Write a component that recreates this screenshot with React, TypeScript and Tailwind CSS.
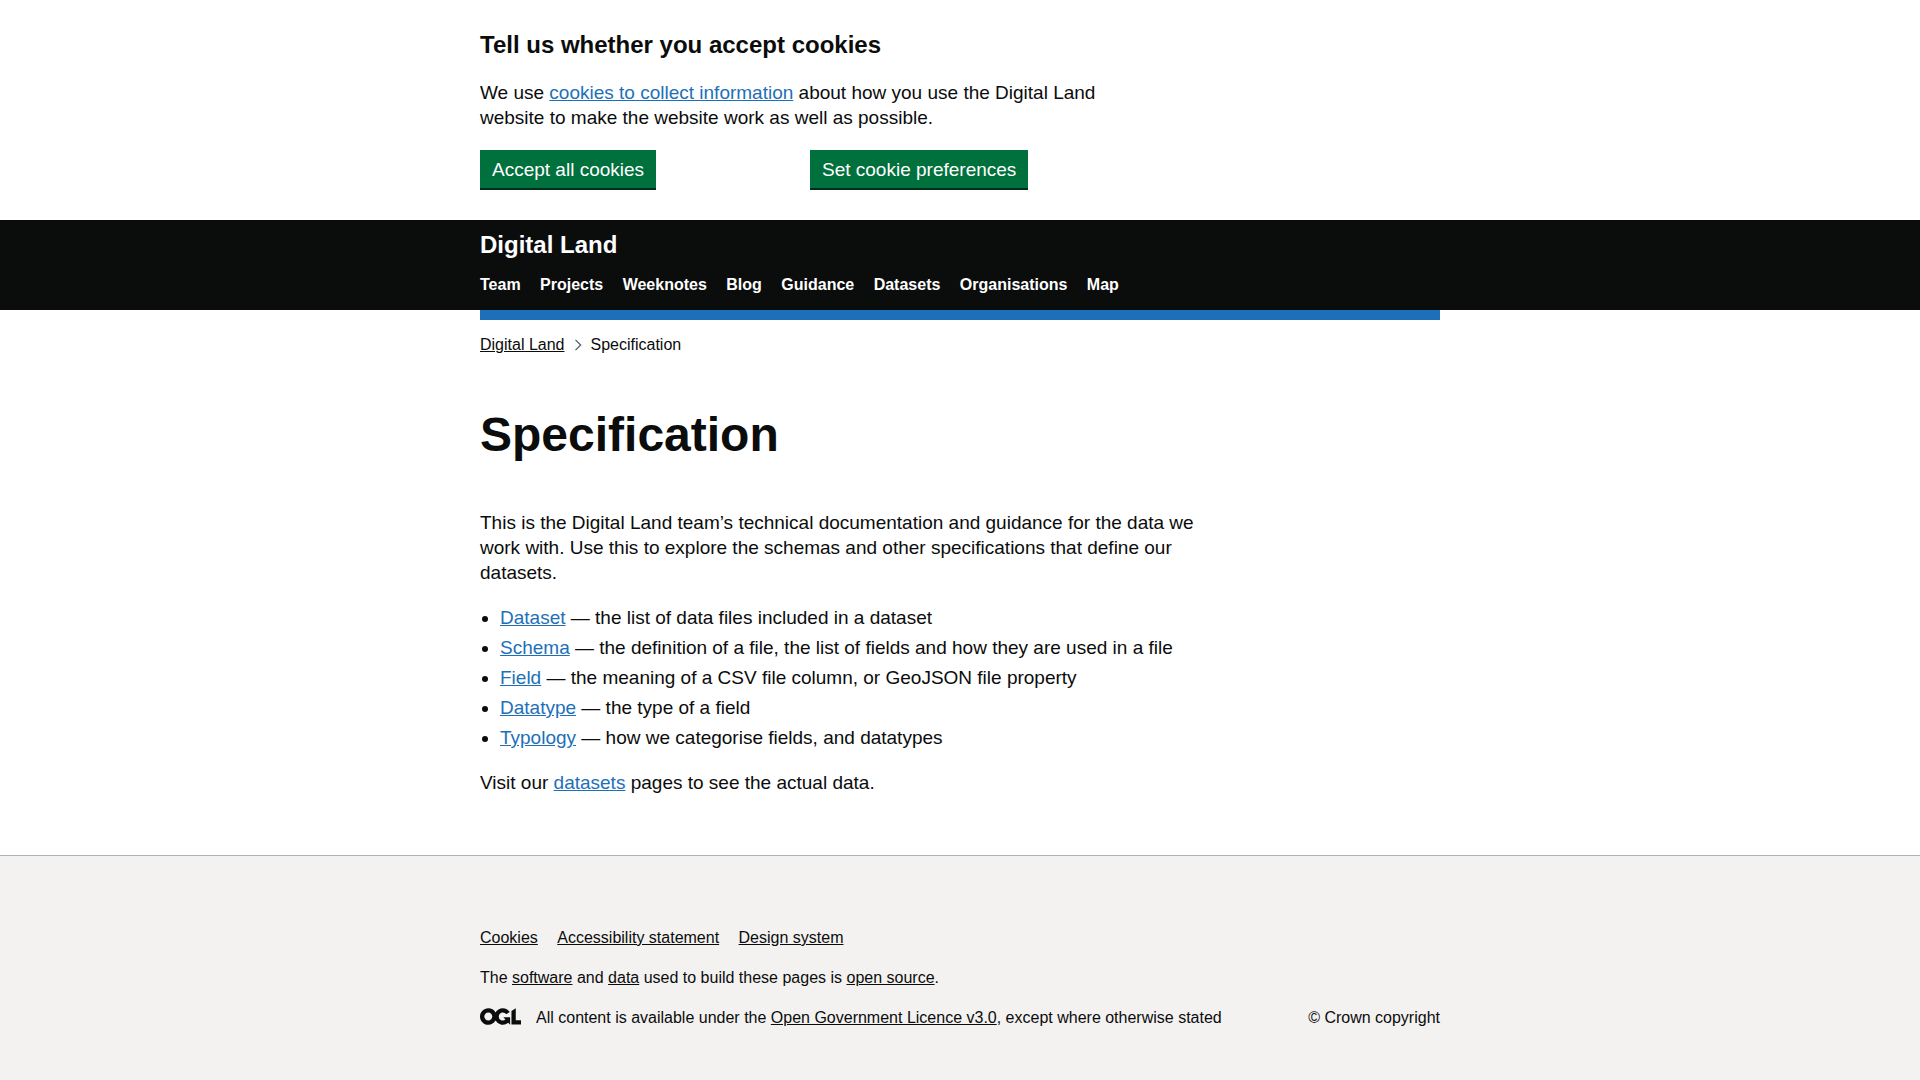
import type { ReactNode } from "react";

const navItems = ["Team", "Projects", "Weeknotes", "Blog", "Guidance", "Datasets", "Organisations", "Map"];

const sections = [
  { name: "Dataset", text: "the list of data files included in a dataset" },
  { name: "Schema", text: "the definition of a file, the list of fields and how they are used in a file" },
  { name: "Field", text: "the meaning of a CSV file column, or GeoJSON file property" },
  { name: "Datatype", text: "the type of a field" },
  { name: "Typology", text: "how we categorise fields, and datatypes" },
];

const footerLinks = ["Cookies", "Accessibility statement", "Design system"];

function Container({ children }: { children: ReactNode }) {
  return <div className="mx-auto w-full max-w-[960px]">{children}</div>;
}

function Link({ children }: { children: ReactNode }) {
  return (
    <a href="#" className="text-[#1d70b8] underline">
      {children}
    </a>
  );
}

function DarkLink({ children }: { children: ReactNode }) {
  return (
    <a href="#" className="underline">
      {children}
    </a>
  );
}

function Button({ children }: { children: ReactNode }) {
  return (
    <button
      type="button"
      className="mb-0.5 h-[38px] bg-[#00703c] px-3 text-[19px] leading-[19px] text-white shadow-[0_2px_0_#002d18]"
    >
      {children}
    </button>
  );
}

function CookieBanner() {
  return (
    <section aria-label="Cookie banner" className="py-[30px]">
      <Container>
        <h2 className="mb-5 text-2xl leading-[30px] font-bold">Tell us whether you accept cookies</h2>
        <p className="mb-5 max-w-[630px]">
          We use <Link>cookies to collect information</Link> about how you use the Digital Land website to make the
          website work as well as possible.
        </p>
        <div className="grid grid-cols-[330px_1fr] justify-items-start">
          <Button>Accept all cookies</Button>
          <Button>Set cookie preferences</Button>
        </div>
      </Container>
    </section>
  );
}

function Header() {
  return (
    <header className="bg-[#0b0c0c] pt-2.5 pb-[15px] text-white">
      <Container>
        <a href="#" className="block text-2xl leading-[30px] font-bold">
          Digital Land
        </a>
        <nav aria-label="Top level navigation" className="mt-[15px]">
          <ul className="text-base leading-5 font-bold">
            {navItems.map((item) => [
              <li key={item} className="mr-[15px] inline">
                <a href="#">{item}</a>
              </li>,
              " ",
            ])}
          </ul>
        </nav>
      </Container>
    </header>
  );
}

function Breadcrumbs() {
  return (
    <nav aria-label="Breadcrumb" className="pt-[15px]">
      <ol className="flex items-center text-base leading-5">
        <li>
          <DarkLink>Digital Land</DarkLink>
        </li>
        <li className="flex items-center" aria-current="page">
          <svg
            width="7"
            height="12"
            viewBox="0 0 7 12"
            className="mr-[9px] ml-[10px]"
            fill="none"
            stroke="#505a5f"
            strokeWidth="1.2"
            aria-hidden="true"
          >
            <path d="M0.5 0.8 L5.7 6 L0.5 11.2" />
          </svg>
          Specification
        </li>
      </ol>
    </nav>
  );
}

function OglLogo() {
  return (
    <svg className="mr-[15px] shrink-0" width="41" height="17" viewBox="0 0 483.2 195.7" fill="currentColor" aria-hidden="true">
      <path d="M421.5 142.8V.1l-50.7 32.3v161.1h112.4v-50.7zm-122.3-9.6A47.12 47.12 0 0 1 221 97.8c0-26 21.1-47.1 47.1-47.1 16.7 0 31.4 8.7 39.7 21.8l42.7-27.2A97.63 97.63 0 0 0 268.1 0c-36.5 0-68.3 20.1-85.1 49.7A98 98 0 0 0 97.8 0C43.9 0 0 43.9 0 97.8s43.9 97.8 97.8 97.8c36.5 0 68.3-20.1 85.1-49.7a97.76 97.76 0 0 0 149.6 25.4l19.4 22.2h3v-87.8h-80l24.3 27.5zM97.8 145c-26 0-47.1-21.1-47.1-47.1s21.1-47.1 47.1-47.1 47.1 21.1 47.1 47.1S123.8 145 97.8 145" />
    </svg>
  );
}

function Footer() {
  return (
    <footer className="grow border-t border-[#b1b4b6] bg-[#f3f2f1] pt-[72px] pb-10 text-base leading-5">
      <Container>
        <ul className="mb-5">
          {footerLinks.map((item) => [
            <li key={item} className="mr-[15px] inline">
              <DarkLink>{item}</DarkLink>
            </li>,
            " ",
          ])}
        </ul>
        <p className="mb-5">
          The <DarkLink>software</DarkLink> and <DarkLink>data</DarkLink> used to build these pages is{" "}
          <DarkLink>open source</DarkLink>.
        </p>
        <div className="flex items-start">
          <OglLogo />
          <p className="grow">
            All content is available under the <DarkLink>Open Government Licence v3.0</DarkLink>, except where otherwise
            stated
          </p>
          <a href="#">© Crown copyright</a>
        </div>
      </Container>
    </footer>
  );
}

export default function App() {
  return (
    <div className="flex min-h-screen flex-col bg-white font-['Liberation_Sans',Arial,sans-serif] text-[19px] leading-[25px] text-[#0b0c0c]">
      <CookieBanner />
      <Header />
      <Container>
        <div className="h-2.5 bg-[#1d70b8]" />
        <Breadcrumbs />
        <main className="pt-[55px] pb-[60px]">
          <h1 className="mb-[50px] text-5xl leading-[50px] font-bold">Specification</h1>
          <div className="max-w-[720px]">
            <p className="mb-5">
              This is the Digital Land team’s technical documentation and guidance for the data we work with. Use this
              to explore the schemas and other specifications that define our datasets.
            </p>
            <ul className="mb-5 list-disc space-y-[5px] pl-5">
              {sections.map((section) => (
                <li key={section.name}>
                  <Link>{section.name}</Link> — {section.text}
                </li>
              ))}
            </ul>
            <p>
              Visit our <Link>datasets</Link> pages to see the actual data.
            </p>
          </div>
        </main>
      </Container>
      <Footer />
    </div>
  );
}
